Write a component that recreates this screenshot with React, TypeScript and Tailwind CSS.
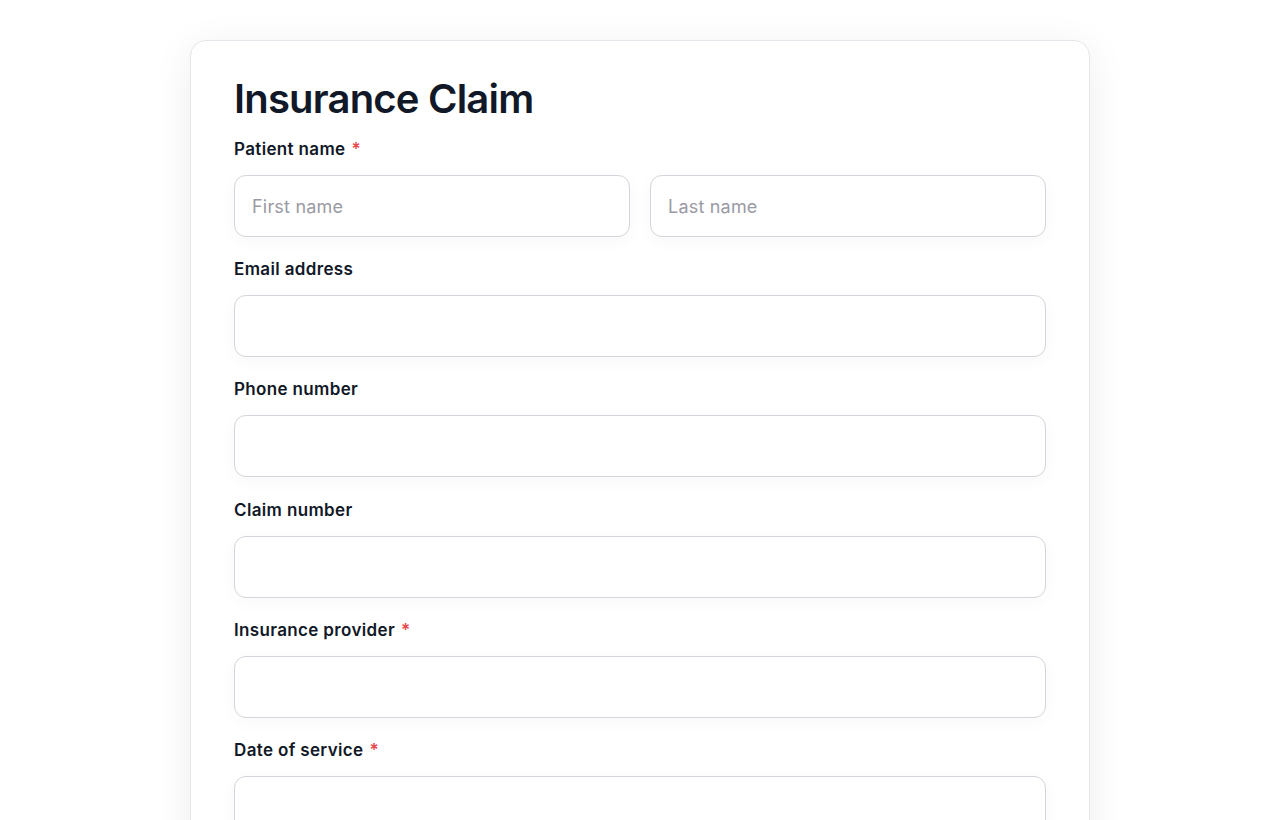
import React from 'react';

const font = { fontFamily: 'Inter, "Noto Sans", sans-serif' };

const Label: React.FC<{ text: string; required?: boolean }> = ({ text, required }) => (
  <label className="block text-[17px] leading-6 font-semibold text-[#111827] tracking-[0.35px]">
    {text}
    {required && <span className="ml-[6px] text-[#e5484d]">*</span>}
  </label>
);

const Input: React.FC<{ placeholder?: string }> = ({ placeholder }) => (
  <input
    placeholder={placeholder}
    className="w-full h-[62px] rounded-xl border border-[#d4d4dc] bg-white px-[17px] text-[18px] tracking-[0.2px] text-[#111827] placeholder:text-[#9a9aa3] outline-none shadow-[0_4px_18px_rgba(15,23,42,0.03)]"
  />
);

const fields = [
  { label: 'Email address' },
  { label: 'Phone number' },
  { label: 'Claim number' },
  { label: 'Insurance provider', required: true },
  { label: 'Date of service', required: true },
];

export default function App() {
  return (
    <div className="min-h-screen bg-white" style={font}>
      <div className="mx-auto mt-10 w-[900px] rounded-2xl border border-[#e6e6ec] bg-white px-[43px] pt-[34px] pb-10 shadow-[0_8px_40px_rgba(15,23,42,0.07)]">
        <h1 className="text-[40px] leading-[48px] font-semibold text-[#111827] tracking-[-0.8px]">Insurance Claim</h1>

        <div className="mt-[14px] flex flex-col gap-[20.2px]">
          <div className="flex flex-col gap-[14px]">
            <Label text="Patient name" required />
            <div className="grid grid-cols-2 gap-5">
              <Input placeholder="First name" />
              <Input placeholder="Last name" />
            </div>
          </div>

          {fields.map(f => (
            <div key={f.label} className="flex flex-col gap-[14px]">
              <Label text={f.label} required={f.required} />
              <Input />
            </div>
          ))}
        </div>
      </div>
    </div>
  );
}
